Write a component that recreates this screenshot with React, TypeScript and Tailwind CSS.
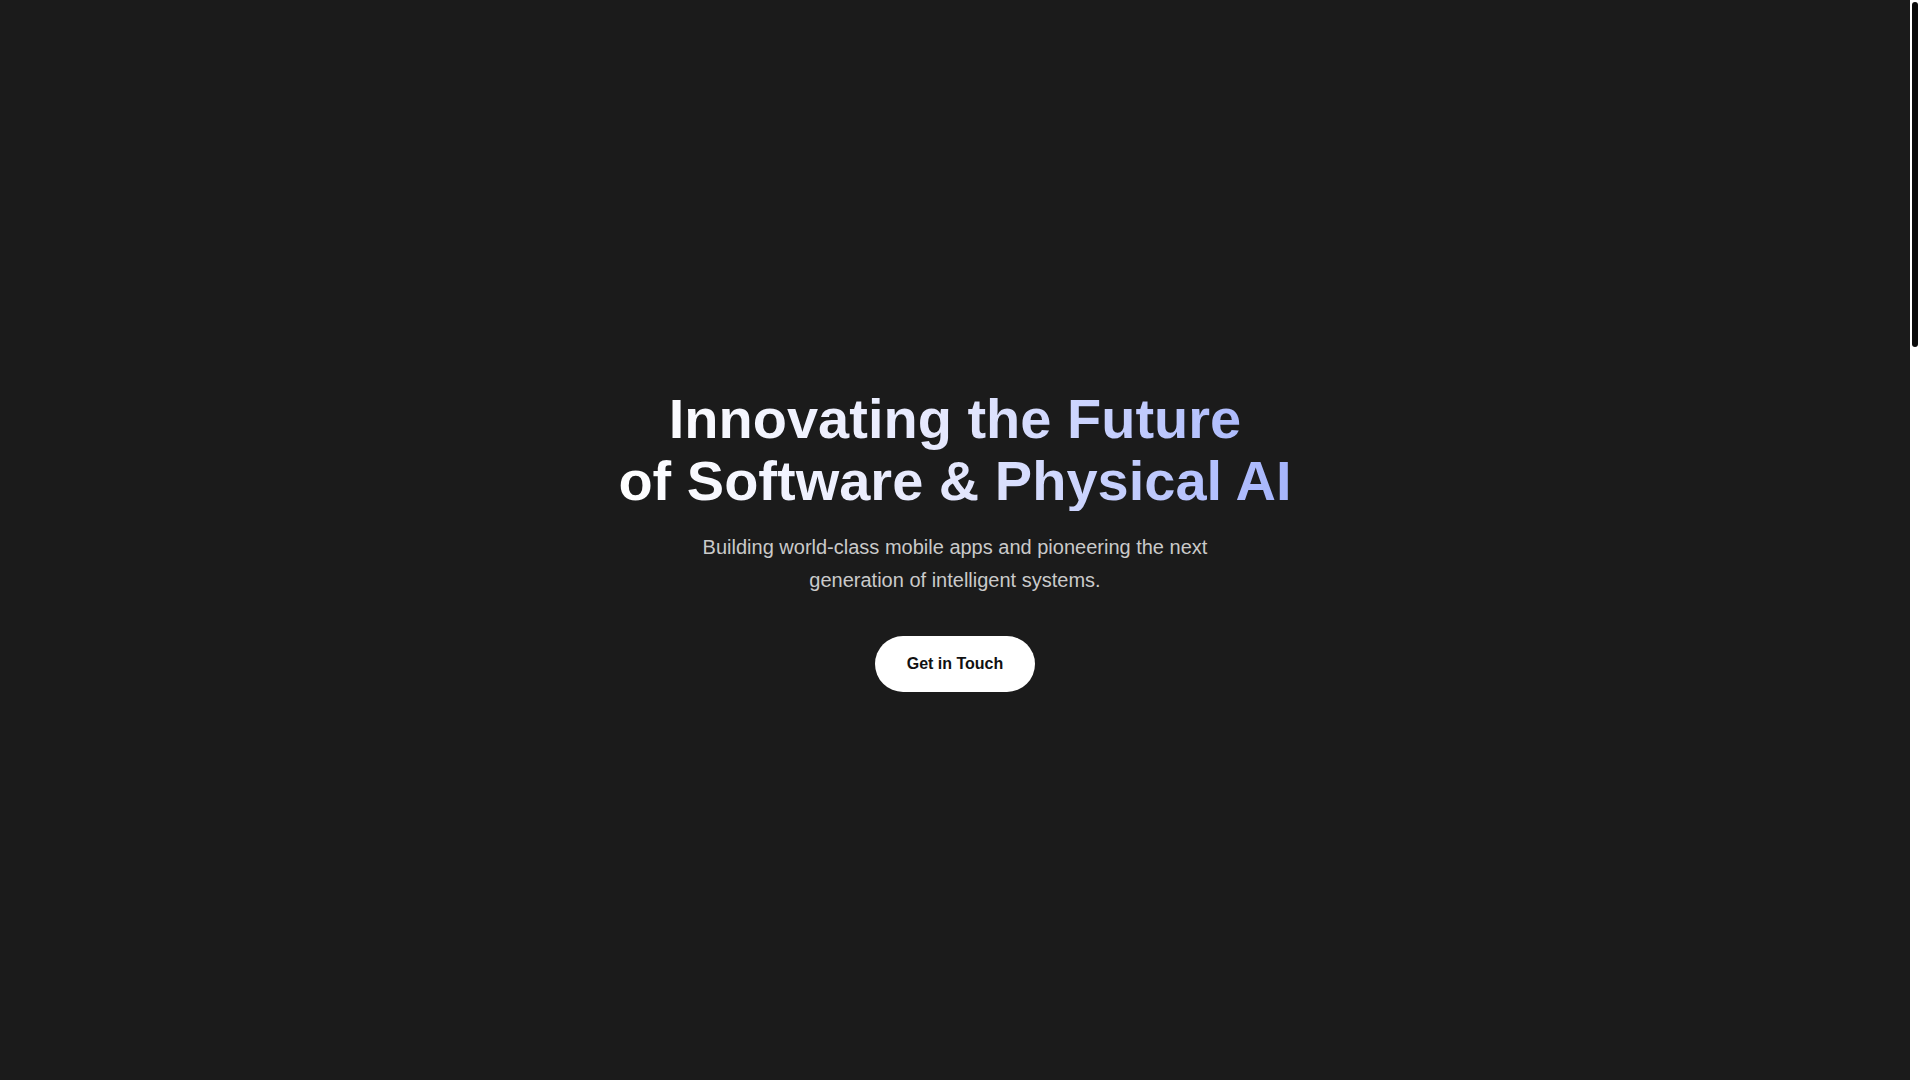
import React from 'react';

// Browser scrollbar as it appears in the capture (white track, dark rounded thumb)
const ScrollTrack: React.FC = () => (
  <div className="w-[10px] shrink-0 bg-white">
    <div className="mx-[2px] mt-[2px] h-[345px] rounded-full bg-[#0b0b0b]" />
  </div>
);

const App: React.FC = () => {
  return (
    <div className="flex h-screen overflow-hidden bg-[#1b1b1b] font-['Liberation_Sans',Arial,sans-serif]">
      <main className="flex-1 min-w-0">
        {/* Hero */}
        <section className="h-screen flex items-center justify-center px-6">
          <div className="flex flex-col items-center text-center">
            <h1 className="text-[56px] leading-[1.1] font-bold bg-gradient-to-r from-white via-[#e4e7fd] to-[#a5b4fc] bg-clip-text text-transparent">
              Innovating the Future
              <br />
              of Software &amp; Physical AI
            </h1>
            <p className="mt-5 max-w-xl text-xl leading-relaxed text-[#cacaca]">
              Building world-class mobile apps and pioneering the next generation of intelligent systems.
            </p>
            <button className="mt-10 rounded-full bg-white px-8 py-4 text-base font-bold text-[#111111]">
              Get in Touch
            </button>
          </div>
        </section>
      </main>
      <ScrollTrack />
    </div>
  );
};

export default App;
